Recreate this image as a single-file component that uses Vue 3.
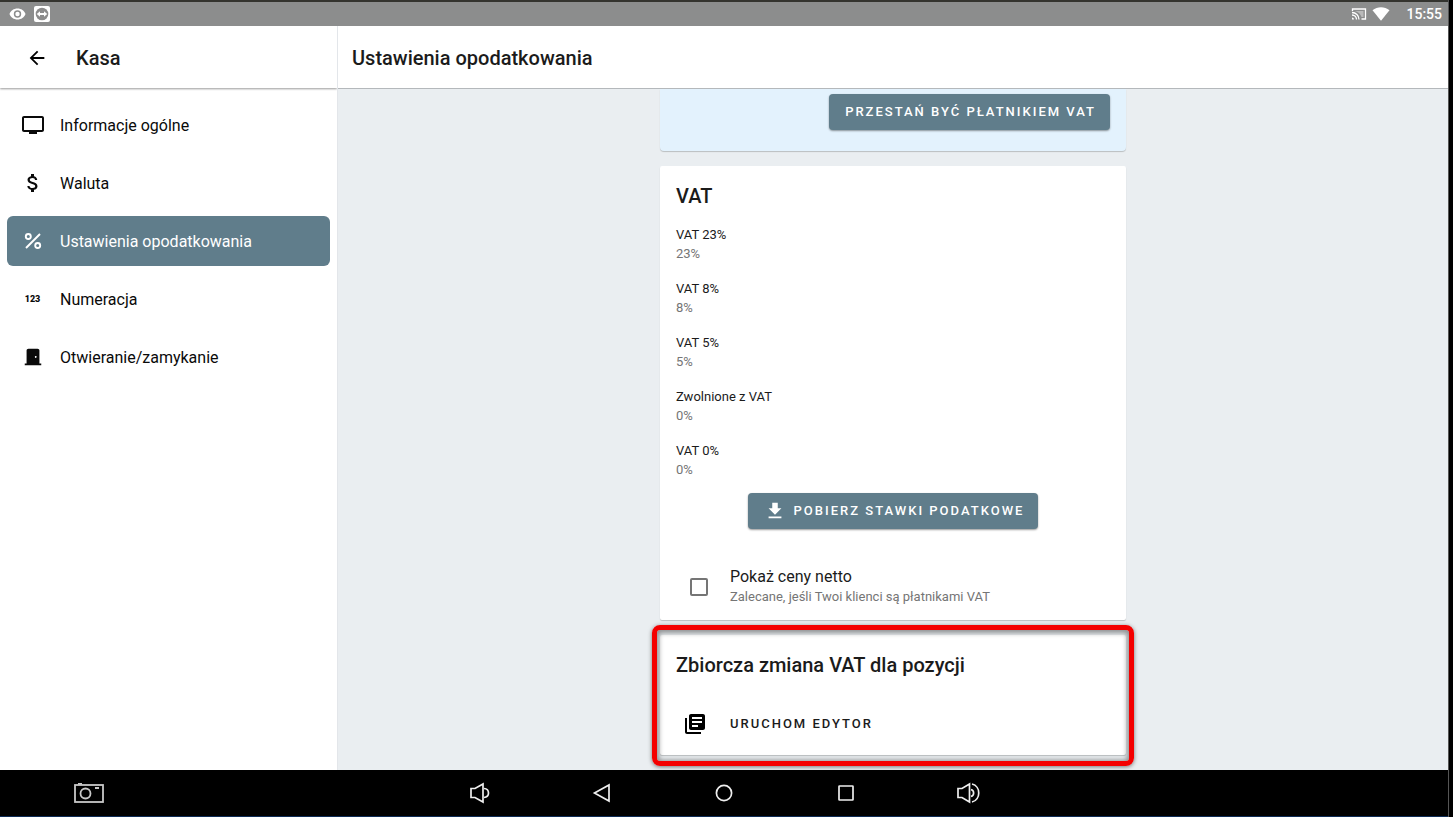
<template>
  <div class="device">
    <div class="status-bar">
      <div class="status-group">
        <svg width="17" height="12" viewBox="0 0 17 12">
          <path fill="#fff" fill-rule="evenodd" d="M8.500 0.500C4.800 0.500 1.700 2.700 0.500 6C1.700 9.300 4.800 11.500 8.500 11.500S15.300 9.300 16.500 6C15.300 2.700 12.200 0.500 8.500 0.500ZM8.500 9.700A3.700 3.700 0 1 1 8.500 2.300A3.700 3.700 0 0 1 8.500 9.700Z" />
          <circle cx="8.500" cy="6" r="2.200" fill="#fff" />
        </svg>
        <svg width="16" height="16" viewBox="0 0 16 16">
          <rect width="16" height="16" rx="2" fill="#fff" />
          <circle cx="8" cy="8" r="6.300" fill="#8c8c8c" />
          <path fill="#fff" d="M2.800 8L6 5.200V7H10V5.200L13.200 8L10 10.800V9H6V10.800Z" />
        </svg>
      </div>
      <div class="status-group">
        <svg width="16" height="12" viewBox="0 0 16 12" fill="none" stroke="#fff" stroke-width="1.300">
          <path d="M1.500 3V1H14.500V11H10.500" />
          <path d="M1 4.500A7 7 0 0 1 8 11.500M1 7A4.500 4.500 0 0 1 5.500 11.500" />
          <path d="M4 3H12.500V9H10.500C9.500 6 7.500 4 4 3Z" fill="#fff" fill-opacity="0.400" stroke="none" />
          <path d="M1 9.500A2 2 0 0 1 3 11.500H1Z" fill="#fff" stroke="none" />
        </svg>
        <svg width="18" height="14" viewBox="0 0 18 14">
          <path fill="#fff" d="M9 13.800L0.500 3.200C5.500 -0.700 12.500 -0.700 17.500 3.200Z" />
        </svg>
        <span class="clock">15:55</span>
      </div>
    </div>

    <div class="app">
      <aside class="sidebar">
        <header class="sidebar-header">
          <button class="back-btn" aria-label="Wstecz">
            <svg width="22" height="22" viewBox="0 0 24 24">
              <path d="M20 11H7.830l5.590-5.590L12 4l-8 8 8 8 1.410-1.410L7.830 13H20v-2z" />
            </svg>
          </button>
          <h1>Kasa</h1>
        </header>
        <nav class="menu">
          <a
            v-for="item in menu"
            :key="item.icon"
            href="#"
            class="menu-item"
            :class="{ active: item.icon === selected }"
            @click.prevent="selected = item.icon"
          >
            <span class="menu-icon">
              <svg v-if="item.icon === 'tv'" width="24" height="24" viewBox="0 0 24 24">
                <path d="M21 3H3c-1.100 0-2 .9-2 2v12c0 1.100.9 2 2 2h5v2h8v-2h5c1.100 0 2-.9 2-2V5c0-1.100-.9-2-2-2zm0 14H3V5h18v12z" />
              </svg>
              <svg v-else-if="item.icon === 'money'" width="24" height="24" viewBox="0 0 24 24">
                <path d="M11.800 10.900c-2.270-.59-3-1.200-3-2.150 0-1.090 1.010-1.850 2.700-1.850 1.780 0 2.440.85 2.500 2.100h2.210c-.07-1.720-1.120-3.300-3.210-3.810V3h-3v2.160c-1.940.42-3.500 1.680-3.500 3.610 0 2.310 1.910 3.460 4.700 4.130 2.500.6 3 1.480 3 2.410 0 .69-.49 1.790-2.700 1.790-2.060 0-2.870-.92-2.980-2.100h-2.200c.12 2.190 1.760 3.420 3.680 3.830V21h3v-2.150c1.950-.37 3.500-1.500 3.500-3.550 0-2.840-2.430-3.810-4.700-4.400z" />
              </svg>
              <svg v-else-if="item.icon === 'percent'" width="24" height="24" viewBox="0 0 24 24" fill="none" stroke="currentColor" stroke-width="1.900">
                <circle cx="7.300" cy="7.500" r="2.500" />
                <circle cx="16.700" cy="16.500" r="2.500" />
                <path d="M5 19L19 5" />
              </svg>
              <span v-else-if="item.icon === 'numbers'" class="digits">123</span>
              <svg v-else width="22" height="22" viewBox="0 0 24 24">
                <path d="M19 19V5c0-1.100-.9-2-2-2H7c-1.100 0-2 .9-2 2v14H3v2h18v-2h-2zm-4-6c-.55 0-1-.45-1-1s.45-1 1-1 1 .45 1 1-.45 1-1 1z" />
              </svg>
            </span>
            <span class="menu-label">{{ item.label }}</span>
          </a>
        </nav>
      </aside>

      <main class="content">
        <header class="content-header">
          <h1>Ustawienia opodatkowania</h1>
        </header>
        <div class="panel">
          <div class="column">
            <section class="card payer-card">
              <button class="btn">PRZESTAŃ BYĆ PŁATNIKIEM VAT</button>
            </section>

            <section class="card vat-card">
              <h2>VAT</h2>
              <ul class="rates">
                <li v-for="rate in rates" :key="rate.name">
                  <div class="rate-name">{{ rate.name }}</div>
                  <div class="rate-value">{{ rate.value }}%</div>
                </li>
              </ul>
              <button class="btn download">
                <svg width="22" height="22" viewBox="0 0 24 24">
                  <path d="M19 9h-4V3H9v6H5l7 7 7-7zM5 18v2h14v-2H5z" />
                </svg>
                POBIERZ STAWKI PODATKOWE
              </button>
              <label class="net-option">
                <input v-model="showNet" type="checkbox">
                <span>
                  <span class="net-title">Pokaż ceny netto</span>
                  <span class="net-hint">Zalecane, jeśli Twoi klienci są płatnikami VAT</span>
                </span>
              </label>
            </section>

            <section class="card editor-card">
              <h2>Zbiorcza zmiana VAT dla pozycji</h2>
              <button class="editor-btn">
                <svg width="24" height="24" viewBox="0 0 24 24">
                  <path d="M4 6H2v14c0 1.100.9 2 2 2h14v-2H4V6zm16-4H8c-1.100 0-2 .9-2 2v12c0 1.100.9 2 2 2h12c1.100 0 2-.9 2-2V4c0-1.100-.9-2-2-2zm-1 9H9V9h10v2zm-4 4H9v-2h6v2zm4-8H9V5h10v2z" />
                </svg>
                URUCHOM EDYTOR
              </button>
              <div class="highlight"></div>
            </section>
          </div>
        </div>
      </main>
    </div>

    <footer class="nav-bar">
      <button class="camera" aria-label="Zrzut ekranu">
        <svg width="30" height="20" viewBox="0 0 30 20" fill="none" stroke="#c8c8c8">
          <rect x="1" y="2" width="28" height="17" stroke-width="1.800" />
          <circle cx="11.500" cy="10.500" r="5" stroke-width="1.800" />
          <path d="M4 0.800H8M21 5H25" stroke-width="1.800" />
        </svg>
      </button>
      <div class="nav-keys">
        <button aria-label="Ciszej">
          <svg width="24" height="24" viewBox="0 0 24 24">
            <path d="M3 7.500H7L15 3V21L7 16.500H3Z" />
            <path d="M16 7.500C22 8 22 16 16 16.500" />
          </svg>
        </button>
        <button aria-label="Wstecz">
          <svg width="24" height="24" viewBox="0 0 24 24">
            <path d="M19 4V20L4.500 12Z" />
          </svg>
        </button>
        <button aria-label="Ekran główny">
          <svg width="24" height="24" viewBox="0 0 24 24">
            <circle cx="12" cy="12" r="7.600" />
          </svg>
        </button>
        <button aria-label="Ostatnie">
          <svg width="24" height="24" viewBox="0 0 24 24">
            <rect x="5" y="5" width="14" height="14" rx="0.500" />
          </svg>
        </button>
        <button aria-label="Głośniej">
          <svg width="24" height="24" viewBox="0 0 24 24">
            <path d="M2 7.500H6L13.500 3V21L6 16.500H2Z" />
            <path d="M15 8.500C18.500 9.500 18.500 14.500 15 15.500M16 3C25 5 25 19 16 21" />
          </svg>
        </button>
      </div>
    </footer>
  </div>
</template>

<script setup>
import { ref } from 'vue'

const selected = ref('percent')
const showNet = ref(false)

const menu = [
  { icon: 'tv', label: 'Informacje ogólne' },
  { icon: 'money', label: 'Waluta' },
  { icon: 'percent', label: 'Ustawienia opodatkowania' },
  { icon: 'numbers', label: 'Numeracja' },
  { icon: 'door', label: 'Otwieranie/zamykanie' }
]

const rates = [
  { name: 'VAT 23%', value: 23 },
  { name: 'VAT 8%', value: 8 },
  { name: 'VAT 5%', value: 5 },
  { name: 'Zwolnione z VAT', value: 0 },
  { name: 'VAT 0%', value: 0 }
]
</script>

<style>
body {
  margin: 0;
  background: #000;
}
</style>

<style scoped>
* {
  box-sizing: border-box;
}

.device {
  display: flex;
  flex-direction: column;
  height: 100vh;
  margin-right: 4px;
  border-right: 1px solid #555;
  font-family: Roboto, sans-serif;
  color: #1b1b1b;
}

h1,
h2 {
  margin: 0;
  font-size: 20px;
  line-height: 24px;
  font-weight: 500;
}

svg {
  flex: none;
  fill: currentColor;
}

svg[fill="none"] {
  fill: none;
}

button {
  border: none;
  padding: 0;
  background: none;
  color: inherit;
  font: 500 13px/20px Roboto, sans-serif;
  cursor: pointer;
}

/* Status bar */
.status-bar {
  flex: none;
  display: flex;
  align-items: center;
  justify-content: space-between;
  height: 26px;
  padding: 0 6px 0 9px;
  border-top: 2px solid #34342f;
  background: #8c8d8d;
  color: #fff;
}

.status-group {
  display: flex;
  align-items: center;
  gap: 8px;
}

.status-group:last-child {
  gap: 5px;
}

.clock {
  margin-left: 11px;
  font-size: 14px;
  line-height: 20px;
  font-weight: 500;
}

.app {
  flex: 1;
  display: flex;
  min-height: 0;
}

/* Sidebar */
.sidebar {
  flex: none;
  width: 338px;
  overflow: hidden;
  border-right: 1px solid #e3e6ea;
  background: #fff;
}

.sidebar-header {
  display: flex;
  align-items: center;
  gap: 28px;
  height: 62px;
  padding: 2px 26px 0;
  box-shadow: 0 1px 2px rgba(0, 0, 0, 0.4);
}

.back-btn {
  display: flex;
  color: #000;
}

.menu {
  display: flex;
  flex-direction: column;
  gap: 8px;
  padding: 12px 7px;
}

.menu-item {
  display: flex;
  align-items: center;
  gap: 15px;
  height: 50px;
  padding: 0 13px;
  border-radius: 6px;
  color: #0a0a0a;
  font-size: 16px;
  line-height: 24px;
  text-decoration: none;
}

.menu-item.active {
  background: #607d8b;
  color: #fff;
}

.menu-icon {
  display: flex;
  justify-content: center;
  width: 25px;
}

.menu-label {
  padding-top: 2px;
}

.digits {
  font-size: 9px;
  line-height: 12px;
  font-weight: 900;
}

/* Content */
.content {
  flex: 1;
  display: flex;
  flex-direction: column;
  min-width: 0;
}

.content-header {
  flex: none;
  display: flex;
  align-items: center;
  height: 63px;
  padding: 2px 14px 0;
  border-bottom: 1px solid #b4b8bb;
  background: #fff;
}

.panel {
  flex: 1;
  min-height: 0;
  overflow: hidden;
  background: #eaeef1;
}

.column {
  display: flex;
  flex-direction: column;
  gap: 15px;
  max-width: 466px;
  margin: 0 auto;
}

.card {
  position: relative;
  display: flex;
  flex-direction: column;
  padding: 18px 16px 13px;
  border-radius: 2px;
  background: #fff;
  box-shadow: 0 1px 1px rgba(0, 0, 0, 0.2);
}

.payer-card {
  align-items: flex-end;
  padding: 5px 16px 21px;
  border-radius: 0 0 4px 4px;
  background: #e3f2fd;
}

.btn {
  display: flex;
  align-items: center;
  height: 36px;
  padding: 0 14px 0 16px;
  border-radius: 4px;
  background: #607d8b;
  color: #fff;
  letter-spacing: 2px;
  box-shadow: 0 1px 2px rgba(0, 0, 0, 0.4);
}

.download {
  align-self: center;
  gap: 8px;
  margin-top: 14px;
}

.rates {
  display: flex;
  flex-direction: column;
  gap: 16px;
  margin: 17px 0 0;
  padding: 0;
  list-style: none;
  font-size: 13px;
  line-height: 19px;
}

.rate-value {
  color: #757575;
}

.net-option {
  display: flex;
  align-items: center;
  gap: 22px;
  margin-top: 38px;
  padding-left: 14px;
}

.net-option input {
  appearance: none;
  flex: none;
  width: 18px;
  height: 18px;
  margin: 0;
  border: 2px solid #757575;
  border-radius: 2px;
}

.net-option input:checked {
  background: #607d8b;
}

.net-title,
.net-hint {
  display: block;
  line-height: 20px;
}

.net-title {
  font-size: 16px;
}

.net-hint {
  color: #757575;
  font-size: 13px;
}

.editor-btn {
  display: flex;
  align-items: center;
  align-self: flex-start;
  gap: 23px;
  height: 36px;
  margin-top: 29px;
  padding-left: 7px;
  letter-spacing: 2px;
}

.editor-btn svg {
  fill: #000;
}

.highlight {
  position: absolute;
  inset: -10px -8px -11px;
  border: 5px solid #f40000;
  border-radius: 8px;
  box-shadow: 0 1px 4px rgba(0, 0, 0, 0.5), inset 0 1px 5px 2px rgba(0, 0, 0, 0.4);
  pointer-events: none;
}

/* System navigation */
.nav-bar {
  position: relative;
  flex: none;
  display: flex;
  align-items: center;
  justify-content: center;
  height: 47px;
  border-bottom: 1px solid #0d2b55;
  background: #000;
}

.nav-bar button {
  display: flex;
}

.camera {
  position: absolute;
  left: 74px;
}

.nav-keys {
  display: flex;
  justify-content: space-between;
  width: 50%;
  max-width: 512px;
}

.nav-keys svg {
  fill: none;
  stroke: #eee;
  stroke-width: 1.7;
}
</style>
